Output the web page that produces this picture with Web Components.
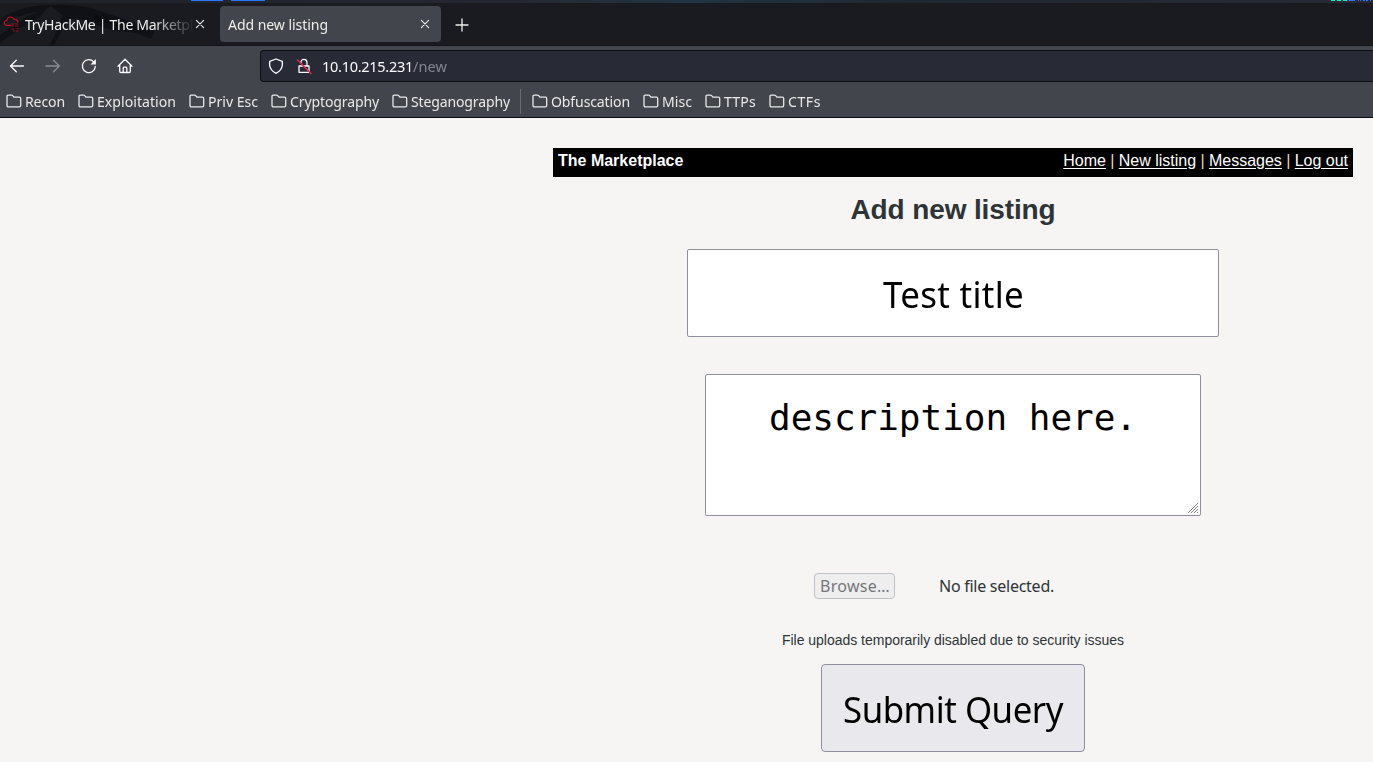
<!DOCTYPE html>
<html lang="en">
<head>
<meta charset="utf-8">
<title>Add new listing</title>
<style>
html,body{margin:0;height:100%;overflow:hidden;background:#f6f5f4}
</style>
</head>
<body>
<browser-window></browser-window>
<script>
const define = (name, html, setup) => customElements.define(name, class extends HTMLElement {
  connectedCallback() {
    if (this.shadowRoot) return;
    const t = document.createElement('template');
    t.innerHTML = html;
    this.attachShadow({mode: 'open'}).append(t.content.cloneNode(true));
    if (setup) setup.call(this, this.shadowRoot);
  }
});

/* One line of text whose tracking is adjusted to fill the given width;
   "s" optionally condenses the glyphs themselves. */
define('fit-text', `<style>:host{display:inline-block;white-space:nowrap}span{display:inline-block;transform-origin:0 50%}</style><span><slot></slot></span>`, function (root) {
  const span = root.querySelector('span');
  const want = parseFloat(this.getAttribute('w'));
  const s = parseFloat(this.getAttribute('s') || 1);
  const n = this.textContent.length;
  this.style.width = want + 'px';
  const have = span.getBoundingClientRect().width;
  span.style.letterSpacing = ((want / s - have) / n).toFixed(3) + 'px';
  if (s !== 1) { span.style.transform = `scaleX(${s})`; span.style.marginRight = (want - want / s) + 'px'; }
});

const icons = {
  back: '<path d="M14.500 8H1.500M7.300 2.300 1.500 8l5.800 5.700"/>',
  forward: '<path d="M1 8h13.300M8.500 2.300 14.300 8l-5.800 5.700"/>',
  reload: '<path d="M14.300 8.500A6.500 6.500 0 1 1 12.600 3.700"/><path d="M14.900 1v5.600H9.500z" fill="currentColor" stroke="none"/>',
  home: '<path d="M1 8.300 8 1.300l7 7M2.700 7v6.300q0 1.200 1.200 1.200h8.200q1.200 0 1.200-1.200V7M6.200 14.500V10q0-.900.900-.900h1.800q.900 0 .900.900v4.500"/>',
  folder: '<path d="M1 12.500v-9q0-1.300 1.300-1.300h3.300q.600 0 1 .400l1.500 1.600h5.300q1.300 0 1.300 1.300v7q0 1.300-1.300 1.300H2.300Q1 13.800 1 12.500z"/>',
  shield: '<path d="M8 1 14.300 3.300Q15 8 12.700 11.500 11 14 8 15.300 5 14 3.300 11.500 1 8 1.700 3.300z"/>',
  lock: '<path d="M3 8h10v6.300H3zM5 4.500Q5 1.300 8 1.300t3 3.200V8"/><path d="M1.500 2 15 15.500" stroke="#e22850" stroke-width="1.500"/>',
  close: '<path d="m4.400 4.400 7.200 7.200M11.600 4.400l-7.200 7.200" stroke-width="1.100"/>',
  plus: '<path d="M8 2v12M2 8h12"/>',
  cloud: '<path d="M8 9.300H3.300A2.400 2.400 0 0 1 2.600 4.800L4 4.300Q4.200 1 7.500 1q2.600 0 3.500 2.300 3.300-.300 3.800 2.700" stroke-width="1.200"/><path d="M9 8h2.200m1.500 0h2.500M9.500 10h1m2 0h2.500M8.500 13h2.500m3-.300h1.500M10.500 15h1m1.500 0h2" stroke-width="1" opacity=".75"/>'
};
define('ui-icon', `<style>:host{display:block;flex:none;width:16px;height:16px}svg{display:block;width:100%;height:100%;overflow:visible}</style><svg viewBox="0 0 16 16" fill="none" stroke="currentColor" stroke-width="1.3" stroke-linejoin="round" stroke-linecap="round"></svg>`, function (root) {
  root.querySelector('svg').innerHTML = icons[this.getAttribute('name')];
});

define('desktop-strip', `<style>:host{display:block;height:3px;background:linear-gradient(90deg,#202229,#252832 38%,#203542 50%,#202933 65%,#272a36)}svg{display:block}</style>
<svg width="1373" height="3"><path d="M191 0h32v1h-32zM231 0h34v1h-34z" fill="#2878ff"/><path d="M1331 0h4v1h-4zM1337 0h4v1h-4zM1343 0h4v1h-4z" fill="#00f0d0"/><path d="M1349 0h6v1h-6zM1358 0h1v1h-1zM1360 0h1v1h-1zM1363 0h2v1h-2zM1366 0h2v1h-2zM1370 0h1v1h-1z" fill="#2878ff"/></svg>`);

define('tab-strip', `<style>
:host{display:flex;box-sizing:border-box;height:43px;padding-top:3px;background:#191b20;border-bottom:1px solid #121318;position:relative;font:14.67px/36px "Noto Sans",sans-serif;color:#eeeeed}
.art{position:absolute;left:0;top:0}
.tab{position:relative;display:flex;align-items:center;box-sizing:border-box;height:36px}
.first{width:216px;padding-left:3px;margin-right:4px}
.first .label{width:173px;margin-left:6px;height:36px;-webkit-mask-image:linear-gradient(90deg,#000 74%,transparent 98%);mask-image:linear-gradient(90deg,#000 74%,transparent 98%)}
.first .logo{color:#c41220;margin-top:-1px}
.active{width:221px;padding:0 8px;background:#43454c;border-radius:4px;justify-content:space-between}
.plus{margin:11px 0 0 13px}
</style>
<svg class="art" width="160" height="42" fill="#101116"><path d="M0 16Q24 1 52 2L44 8Q20 10 0 22zM0 32 26 14 46 6 40 14 22 24 8 34 0 40z"/><path d="M50 2Q84 0 106 10L138 21 155 28 151 36 136 30 118 28Q98 24 84 17 70 12 64 24L54 42H50Q58 26 62 12z"/><path d="M86 9l9 6-2-6 10 8-1-7 12 11-16-2z" fill="#0c0d11"/></svg>
<div class="tab first"><ui-icon class="logo" name="cloud"></ui-icon><div class="label"><fit-text w="168" s=".96">TryHackMe | The Marketpl</fit-text></div><ui-icon name="close" style="margin-left:-6px"></ui-icon></div>
<div class="tab active"><fit-text w="100" s=".96">Add new listing</fit-text><ui-icon name="close"></ui-icon></div>
<ui-icon class="plus" name="plus"></ui-icon>`);

define('nav-toolbar', `<style>
:host{display:flex;align-items:center;box-sizing:border-box;height:41px;background:#43454c;color:#fbfbfe;padding:0 0 1px 9px;font:15px "Noto Sans",sans-serif}
.buttons{display:flex;gap:20px;width:251px}
.dim{color:#8b8c91}
.url{display:flex;align-items:center;box-sizing:border-box;flex:1;height:32px;border:1px solid #0f1015;border-right:0;border-radius:4px 0 0 4px;background:#282a36;padding-left:7px}
.lock{margin:0 10px 0 12px}
.path{color:#85868e}
</style>
<div class="buttons"><ui-icon name="back"></ui-icon><ui-icon class="dim" name="forward"></ui-icon><ui-icon name="reload"></ui-icon><ui-icon name="home"></ui-icon></div>
<div class="url"><ui-icon name="shield"></ui-icon><ui-icon class="lock" name="lock"></ui-icon><fit-text w="91" s=".97">10.10.215.231</fit-text><fit-text class="path" w="34" s=".97">/new</fit-text></div>`);

define('bookmark-item', `<style>:host{display:flex;align-items:center;gap:3px}</style><ui-icon name="folder"></ui-icon><slot></slot>`);
define('bookmark-bar', `<style>
:host{display:flex;align-items:center;box-sizing:border-box;height:31px;border-bottom:1px solid #0d0e12;background:#43454c;color:#e9e9ea;padding:0 0 3px 6px;gap:13px;font:14.67px/20px "Noto Sans",sans-serif}
i{width:1px;height:25px;background:#6a6c72;margin:2px -2px 0 -3px}
</style>
<bookmark-item><fit-text w="40" s=".96">Recon</fit-text></bookmark-item>
<bookmark-item><fit-text w="79" s=".96">Exploitation</fit-text></bookmark-item>
<bookmark-item><fit-text w="50" s=".96">Priv Esc</fit-text></bookmark-item>
<bookmark-item><fit-text w="89" s=".96">Cryptography</fit-text></bookmark-item>
<bookmark-item><fit-text w="99" s=".96">Steganography</fit-text></bookmark-item>
<i></i>
<bookmark-item><fit-text w="79" s=".96">Obfuscation</fit-text></bookmark-item>
<bookmark-item><fit-text w="30" s=".96">Misc</fit-text></bookmark-item>
<bookmark-item><fit-text w="32" s=".96">TTPs</fit-text></bookmark-item>
<bookmark-item><fit-text w="33" s=".96">CTFs</fit-text></bookmark-item>`);

define('site-header', `<style>
:host{display:flex;justify-content:space-between;box-sizing:border-box;width:800px;height:29px;background:#000;color:#fff;padding:3px 5px;font:16px/19px "Liberation Sans",sans-serif}
a{color:#fff;text-decoration:underline;text-underline-offset:2px}nav{color:#e5dea8;word-spacing:-.1px}
</style><b>The Marketplace</b><nav><a>Home</a> | <a>New listing</a> | <a>Messages</a> | <a>Log out</a></nav>`);

define('title-field', `<style>
:host{display:flex;justify-content:center;box-sizing:border-box;width:532px;height:88px;border:1px solid #8f8f9d;border-radius:2px;background:#fff;color:#000;font:36px/90px "Noto Sans",sans-serif}
</style><fit-text w="141" s=".97">Test title</fit-text>`);
define('description-field', `<style>
:host{display:flex;justify-content:center;position:relative;box-sizing:border-box;width:496px;height:142px;border:1px solid #8f8f9d;border-radius:2px;background:#fff;color:#000;padding-top:22px;font:36px/42px "DejaVu Sans Mono",monospace}
svg{position:absolute;right:2px;bottom:2px}
</style><fit-text w="368">description here.</fit-text><svg width="10" height="10" fill="none" stroke="#777"><path d="M0 10 10 0M3 10l7-7M6 10l4-4M9 10l1-1" stroke-width=".9"/></svg>`);
define('file-picker', `<style>
:host{display:flex;align-items:center;height:26px;color:#2e3436;font:16px/24px "Noto Sans",sans-serif}
.b{box-sizing:border-box;width:81px;height:26px;padding-left:5px;border:1px solid #c0c0c7;border-radius:4px;background:#eeeeef;color:#76777a;margin-right:44px}
</style><div class="b"><fit-text w="70">Browse…</fit-text></div><fit-text w="115">No file selected.</fit-text>`);
define('submit-button', `<style>
:host{display:flex;justify-content:center;box-sizing:border-box;width:264px;height:88px;border:1px solid #8f8f9d;border-radius:4px;background:#e9e9ed;color:#000;font:35.500px/89px "Noto Sans",sans-serif}
</style><fit-text w="220" s=".98">Submit Query</fit-text>`);

define('market-page', `<style>
:host{display:flex;flex-direction:column;align-items:center;width:800px;margin:30px 0 0 553px;color:#2e3436;font-family:"Liberation Sans",sans-serif}
h1{margin:16px 0 22px;font:bold 28px/34px "Liberation Sans",sans-serif}
description-field{margin-top:37px}
file-picker{margin:57px 38px 0 0}
p{margin:32px 0 15px;font-size:14px;line-height:18px}
</style>
<site-header></site-header><h1><fit-text w="205">Add new listing</fit-text></h1>
<title-field></title-field><description-field></description-field><file-picker></file-picker>
<p><fit-text w="342">File uploads temporarily disabled due to security issues</fit-text></p>
<submit-button></submit-button>`);

define('browser-window', `<style>:host{display:block;width:1373px;height:762px;overflow:hidden;background:#f6f5f4}market-page{box-sizing:border-box}</style>
<desktop-strip></desktop-strip><tab-strip></tab-strip><nav-toolbar></nav-toolbar><bookmark-bar></bookmark-bar><market-page></market-page>`);
</script>
</body>
</html>
